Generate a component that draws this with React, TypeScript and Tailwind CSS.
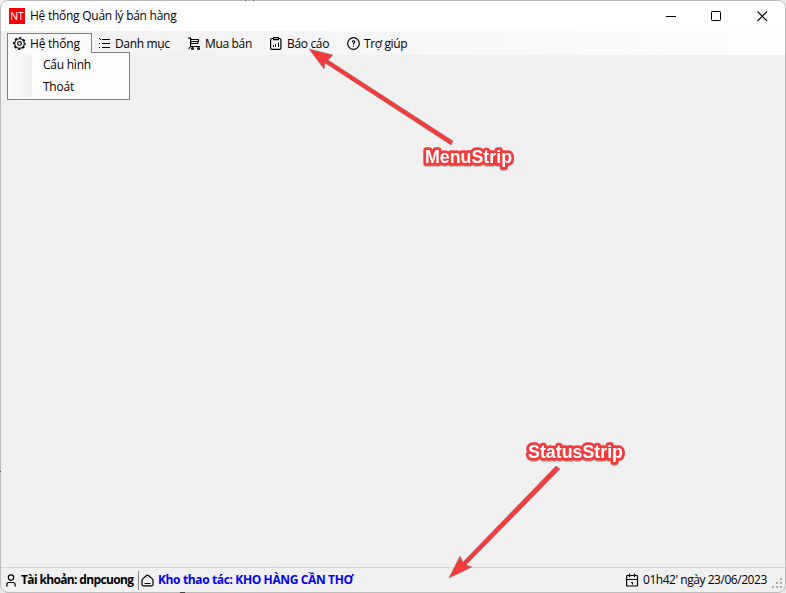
import React from "react";

type IconProps = { className?: string };

const stroke = {
  fill: "none",
  stroke: "#000",
  strokeWidth: 1.2,
  strokeLinecap: "round" as const,
  strokeLinejoin: "round" as const,
};

function GearIcon({ className }: IconProps) {
  return (
    <svg className={className} width="13" height="13" viewBox="0 0 13 13" fill="none" stroke="#000">
      <circle cx="6.5" cy="6.5" r="4.8" strokeWidth="1.1" />
      <circle cx="6.5" cy="6.5" r="5.7" strokeWidth="1.4" strokeDasharray="2.3 2.177" strokeDashoffset="1.15" />
      <circle cx="6.5" cy="6.5" r="1.9" strokeWidth="1.1" />
    </svg>
  );
}

function ListIcon({ className }: IconProps) {
  return (
    <svg className={className} width="12" height="11" viewBox="0 0 12 11" shapeRendering="crispEdges">
      <path fill="#000" d="M0 0h1v1H0zM3 1h8v1H3zM0 5h1v1H0zM3 5h8v1H3zM0 9h1v1H0zM3 9h8v1H3zM1 1h1v1H1z" />
    </svg>
  );
}

function CartIcon({ className }: IconProps) {
  return (
    <svg className={className} width="13" height="13" viewBox="0 0 13 13" {...stroke}>
      <path d="M.6 1.200h2V9.500h8.900M2.600 2.500h8L9.800 6.500H2.600M2.600 4.500H9M2.600 9.500 1 11.500" />
      <circle cx="4.500" cy="11.500" r=".9" />
      <circle cx="10.500" cy="11.500" r=".9" />
    </svg>
  );
}

function ReportIcon({ className }: IconProps) {
  return (
    <svg className={className} width="12" height="13" viewBox="0 0 12 13" {...stroke}>
      <path d="M3 1.500H2Q.6 1.500.6 3v8q0 1.400 1.400 1.400h7.500q1.400 0 1.400-1.400V3q0-1.500-1.400-1.500h-1M3.500.6h5v2h-5z" />
      <path strokeLinecap="butt" strokeWidth="1" d="M3.500 8v2M5.500 7v3M8.500 5.500V10" />
    </svg>
  );
}

function HelpIcon({ className }: IconProps) {
  return (
    <svg className={className} width="13" height="13" viewBox="0 0 13 13" {...stroke}>
      <circle cx="6.500" cy="6.500" r="5.800" />
      <path d="M5.400 4.700c.2-1.300 2.300-1.200 2.200.1 0 1-1.100 1-1.100 2.200M6.500 9v.2" />
    </svg>
  );
}

function UserIcon({ className }: IconProps) {
  return (
    <svg className={className} width="10" height="13" viewBox="0 0 10 13" {...stroke}>
      <circle cx="5" cy="3.600" r="2.700" />
      <path d="M.9 12.200V10.500Q.9 8.500 3 8.500h4q2.100 0 2.100 2v1.700" />
    </svg>
  );
}

function HomeIcon({ className }: IconProps) {
  return (
    <svg className={className} width="13" height="13" viewBox="0 0 13 13" {...stroke}>
      <path d="M1 6.300Q1 5.500 1.700 4.900L5.500 1.500q1-.9 2 0l3.800 3.400q.7.600.7 1.400v4.100q0 1.500-1.500 1.500h-8Q1 11.900 1 10.400zM4 9.500h5" />
    </svg>
  );
}

function CalendarIcon({ className }: IconProps) {
  return (
    <svg className={className} width="13" height="14" viewBox="0 0 13 14" {...stroke}>
      <rect x=".6" y="2.500" width="10.900" height="10.500" rx=".4" />
      <path d="M1 6.500h10.500M3.500 1v2.500M8.500 1v2.500M5.500 9.500h1v1.500" />
    </svg>
  );
}

const menu = [
  { label: "Danh mục", Icon: ListIcon, item: "w-[90px]", icon: "ml-[7px]", text: "ml-[4px] tracking-[-0.34px]" },
  { label: "Mua bán", Icon: CartIcon, item: "w-[82px]", icon: "ml-[6px]", text: "ml-[4px] tracking-[-0.34px]" },
  { label: "Báo cáo", Icon: ReportIcon, item: "w-[77px]", icon: "ml-[6px]", text: "ml-[5px] tracking-[-0.34px]" },
  { label: "Trợ giúp", Icon: HelpIcon, item: "w-[78px]", icon: "ml-[6px]", text: "ml-[4px] tracking-[-0.38px]" },
];

function TitleBar() {
  return (
    <header className="flex h-[30px] shrink-0 items-center bg-white">
      <div className="ml-2 flex h-4 w-4 items-center justify-center bg-[#fa0000] text-[10.5px] leading-none text-white">NT</div>
      <h1 className="ml-[5px] tracking-[-0.26px]">Hệ thống Quản lý bán hàng</h1>
      <div className="ml-auto mr-[17px] flex items-center gap-[35px]">
        <svg width="10" height="11" viewBox="0 0 10 11"><path d="M0 5.500h10" stroke="#000" /></svg>
        <svg width="11" height="11" viewBox="0 0 11 11"><rect x=".5" y=".5" width="9" height="9" rx=".7" fill="none" stroke="#000" /></svg>
        <svg width="11" height="11" viewBox="0 0 11 11"><path d="m.5.5 9.500 9.500m0-9.500-9.500 9.500" stroke="#000" strokeWidth="1.100" /></svg>
      </div>
    </header>
  );
}

function Dropdown() {
  return (
    <div className="absolute left-[-1px] top-[18px] z-10 flex h-[48px] w-[123px] border border-[#808080] bg-[#fdfdfd] p-px">
      <div className="w-[23px] bg-gradient-to-r from-[#fcfcfc] to-[#f0f0f0]" />
      <ul className="ml-[11px] leading-[22px] tracking-[-0.24px]">
        <li>Cấu hình</li>
        <li>Thoát</li>
      </ul>
    </div>
  );
}

function MenuStrip() {
  return (
    <nav className="flex h-6 shrink-0 items-center bg-gradient-to-r from-[#f0f0f0] to-[#fdfdfd] pl-[6px]">
      <div className="relative h-5 w-[85px] border border-b-0 border-[#808080] bg-[#fafafa]">
        <Dropdown />
        <div className="relative z-20 flex h-[19px] items-center bg-[#fafafa] pl-[5px]">
          <GearIcon />
          <span className="ml-[4px] tracking-[-0.22px]">Hệ thống</span>
        </div>
      </div>
      {menu.map(({ label, Icon, item, icon, text }) => (
        <div key={label} className={`flex items-center pt-px ${item}`}>
          <Icon className={`shrink-0 ${icon}`} />
          <span className={text}>{label}</span>
        </div>
      ))}
    </nav>
  );
}

function StatusStrip() {
  return (
    <footer className="flex h-[25px] shrink-0 items-center border-t border-[#d7d7d7] pl-[5px]">
      <UserIcon className="shrink-0" />
      <b className="ml-[5px] w-[117px] shrink-0 font-bold tracking-[-0.65px]">Tài khoản: dnpcuong</b>
      <span className="h-[19px] w-px shrink-0 bg-[#858585]" />
      <HomeIcon className="ml-[2px] shrink-0" />
      <b className="ml-[4px] font-bold tracking-[-0.37px] text-[#0000f5]">Kho thao tác: KHO HÀNG CẦN THƠ</b>
      <CalendarIcon className="ml-auto shrink-0" />
      <span className="ml-[4px] w-[125px] shrink-0 tracking-[-0.46px]">01h42' ngày 23/06/2023</span>
      <svg className="ml-[4px] mr-px shrink-0 self-end" width="12" height="14" viewBox="0 0 12 14" shapeRendering="crispEdges">
        <path fill="#aaa" d="M8 0h2v2H8zM4 4h2v2H4zM8 4h2v2H8zM0 8h2v2H0zM4 8h2v2H4zM8 8h2v2H8z" />
      </svg>
    </footer>
  );
}

function Annotations() {
  return (
    <svg className="pointer-events-none absolute inset-0 z-30" width="786" height="593" viewBox="0 0 786 593">
      <path fill="#444" d="M180 592h5v1h-5zM0 471h1v1H0zM245 0h1v1h-1zM253 0h1v1h-1z" />
      <g fill="#f43b3b" stroke="#8d7070" strokeWidth=".5">
        <path d="M309 49 333 55 328 60 453 141 451 145 325 63 324 69Z" />
        <path d="M449 578 460 556 463 562 556 466 560 469 466 565 472 567Z" />
      </g>
      <g fontFamily="'Liberation Sans', Arial, sans-serif" fontSize="18" fontWeight="700" fill="#fff" stroke="#f43b3b" strokeWidth="5.5" strokeLinejoin="round" paintOrder="stroke" className="drop-shadow-[0_1px_0.5px_rgba(0,0,0,0.3)]">
        <text x="425" y="162.500" textLength="87" lengthAdjust="spacingAndGlyphs">MenuStrip</text>
        <text x="528" y="457.500" textLength="95" lengthAdjust="spacingAndGlyphs">StatusStrip</text>
      </g>
    </svg>
  );
}

export default function App() {
  return (
    <div className="relative h-[593px] w-[786px] overflow-hidden bg-[#ececec] font-['Open_Sans','Noto_Sans',sans-serif] text-[12px] leading-4 text-black">
      <main className="flex h-full w-full flex-col overflow-hidden whitespace-nowrap rounded-lg border border-[#bcbcbc] bg-[#f0f0f0]">
        <TitleBar />
        <MenuStrip />
        <section className="flex-1" />
        <StatusStrip />
      </main>
      <Annotations />
    </div>
  );
}
